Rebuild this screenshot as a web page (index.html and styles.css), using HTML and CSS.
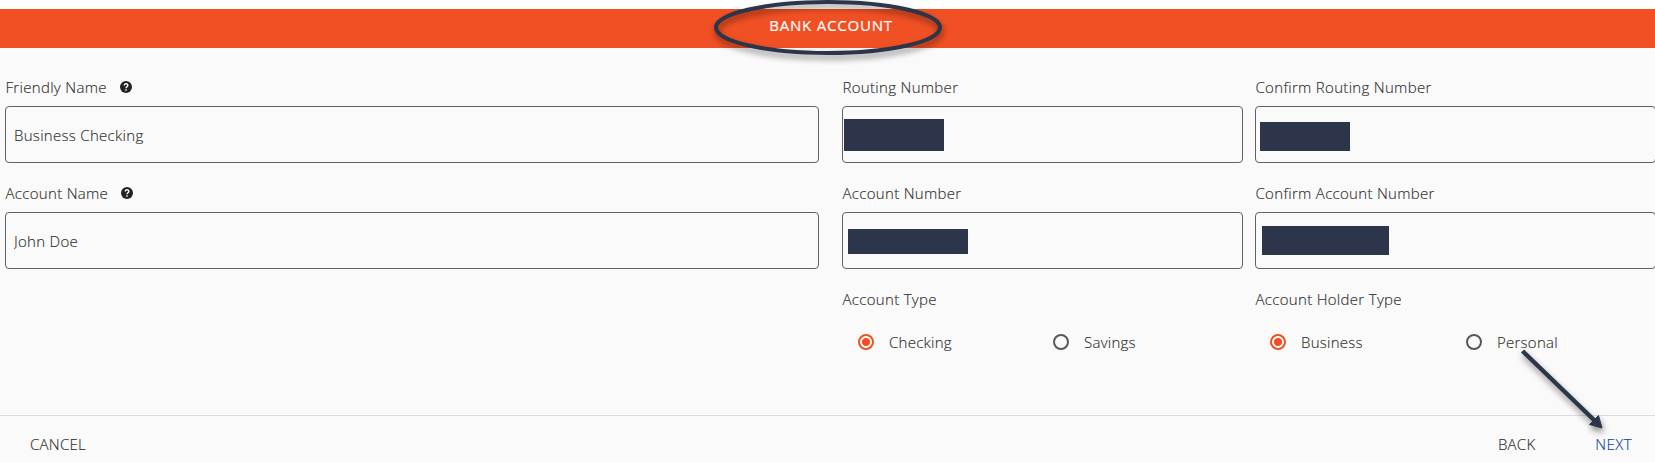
FILE: index.html
```html
<!DOCTYPE html>
<html lang="en">
<head>
    <meta charset="UTF-8">
    <meta name="viewport" content="width=device-width, initial-scale=1.0">
    <title>Bank Account</title>
    <link rel="stylesheet" href="styles.css">
</head>
<body>
    <header class="title-bar">
        <h1>BANK ACCOUNT</h1>
    </header>
    <form id="bankForm">
        <div class="form-grid">
            <div class="field">
                <label for="friendly_name">Friendly Name
                    <svg class="help" viewBox="0 0 12 12"><circle cx="6" cy="6" r="6"/><path d="M4.2 4.6C4.2 2.2 7.8 2.2 7.8 4.4C7.8 5.7 6 5.8 6 7.3M6 8.3V9.7"/></svg>
                </label>
                <input type="text" id="friendly_name" value="Business Checking">
            </div>
            <div class="field">
                <label>Routing Number</label>
                <div class="box"><span class="mask mask-routing"></span></div>
            </div>
            <div class="field">
                <label>Confirm Routing Number</label>
                <div class="box"><span class="mask mask-confirm-routing"></span></div>
            </div>

            <div class="field">
                <label for="account_name">Account Name
                    <svg class="help" viewBox="0 0 12 12"><circle cx="6" cy="6" r="6"/><path d="M4.2 4.6C4.2 2.2 7.8 2.2 7.8 4.4C7.8 5.7 6 5.8 6 7.3M6 8.3V9.7"/></svg>
                </label>
                <input type="text" id="account_name" value="John Doe">
            </div>
            <div class="field">
                <label>Account Number</label>
                <div class="box"><span class="mask mask-account"></span></div>
            </div>
            <div class="field">
                <label>Confirm Account Number</label>
                <div class="box"><span class="mask mask-confirm-account"></span></div>
            </div>

            <div class="field account-type">
                <label>Account Type</label>
                <div class="radios">
                    <label class="radio"><input type="radio" name="account_type" checked>Checking</label>
                    <label class="radio"><input type="radio" name="account_type">Savings</label>
                </div>
            </div>
            <div class="field holder-type">
                <label>Account Holder Type</label>
                <div class="radios">
                    <label class="radio"><input type="radio" name="holder_type" checked>Business</label>
                    <label class="radio"><input type="radio" name="holder_type">Personal</label>
                </div>
            </div>
        </div>

        <div class="actions">
            <button type="button" class="cancel">CANCEL</button>
            <button type="button" class="back">BACK</button>
            <button type="submit" class="next">NEXT</button>
        </div>
    </form>

    <!-- callouts drawn over the form -->
    <svg class="callouts" viewBox="0 0 1655 462">
        <ellipse cx="828" cy="27.5" rx="112" ry="25.5"/>
        <g>
            <path class="line" d="M1522.5 351L1594 420"/>
            <path class="head" d="M1602 428L1589.500 424.500L1598.500 415.500Z"/>
        </g>
    </svg>
</body>
</html>
```
FILE: styles.css
```css
* {
    box-sizing: border-box;
}
body {
    font-family: "Open Sans", sans-serif;
    font-size: 15px;
    font-weight: 300;
    line-height: 20px;
    letter-spacing: 0.25px;
    color: #303030;
    -webkit-text-stroke: 0.15px;
    background-color: #fafafa;
    margin: 0;
    height: 462px;
    overflow: hidden;
}
.title-bar {
    height: 48px;
    border-top: 9px solid #fff;
    background-color: #f15024;
    padding-left: 7px;
}
h1 {
    margin: 0;
    text-align: center;
    color: #fff;
    font-size: 15px;
    font-weight: 400;
    line-height: 32px;
    letter-spacing: 0.8px;
    -webkit-text-stroke: 0.2px;
}
.form-grid {
    display: grid;
    grid-template-columns: 825px 401px 401px;
    grid-template-rows: 106px 106px 126px;
    column-gap: 12px;
    padding: 29px 0 0 5px;
}
.field {
    min-width: 0;
}
.field > label {
    display: flex;
    align-items: center;
    height: 20px;
    margin-bottom: 9px;
    padding-left: 0.5px;
    letter-spacing: 0.31px;
}
.help {
    width: 12px;
    height: 12px;
    margin-left: 13px;
    fill: #222;
}
.help path {
    fill: none;
    stroke: #fff;
    stroke-width: 1.4;
}
.box,
input[type="text"] {
    display: block;
    width: 401px;
    height: 57px;
    border: 1px solid #616163;
    border-radius: 4px;
    background: transparent;
}
input[type="text"] {
    width: 814px;
    padding: 0 8px;
    font: inherit;
    letter-spacing: 0.3px;
    color: inherit;
}
.mask {
    display: block;
    background-color: #2c3549;
}
.mask-routing {
    width: 100px;
    height: 32px;
    margin: 12px 0 0 1px;
}
.mask-confirm-routing {
    width: 90px;
    height: 29px;
    margin: 15px 0 0 4px;
}
.mask-account {
    width: 120px;
    height: 25px;
    margin: 16px 0 0 5px;
}
.mask-confirm-account {
    width: 127px;
    height: 29px;
    margin: 13px 0 0 6px;
}
.account-type {
    grid-column: 2;
}
.radios {
    display: flex;
    margin-top: 23px;
    padding-left: 16px;
}
.holder-type .radios {
    padding-left: 15px;
}
.radio {
    display: flex;
    flex: none;
    align-items: center;
    width: 195px;
    height: 20px;
}
.holder-type .radio {
    width: 196px;
}
input[type="radio"] {
    appearance: none;
    width: 16px;
    height: 16px;
    margin: 0 15px 0 0;
    border: 2px solid #58585a;
    border-radius: 50%;
}
input[type="radio"]:checked {
    border-color: #f15024;
    background: radial-gradient(circle, #f15024 3.7px, transparent 4.3px);
}
.actions {
    display: flex;
    align-items: center;
    height: 47px;
    padding: 10px 23px 0 30px;
    border-top: 1px solid #dcdcdc;
}
button {
    padding: 0;
    border: none;
    background: none;
    font: inherit;
    letter-spacing: inherit;
    color: inherit;
    cursor: pointer;
}
.back {
    margin-left: auto;
}
.next {
    margin-left: 60px;
    letter-spacing: 0.4px;
    color: #12479d;
}
.callouts {
    position: absolute;
    top: 0;
    left: 0;
    width: 1655px;
    height: 462px;
    pointer-events: none;
    filter: drop-shadow(1px 4px 3px rgba(0, 0, 0, 0.45));
}
.callouts ellipse,
.callouts .line {
    fill: none;
    stroke: #2c3549;
    stroke-width: 4;
}
.callouts .line {
    stroke-width: 4.5;
}
.callouts .head {
    fill: #2c3549;
    stroke: #2c3549;
}
```
